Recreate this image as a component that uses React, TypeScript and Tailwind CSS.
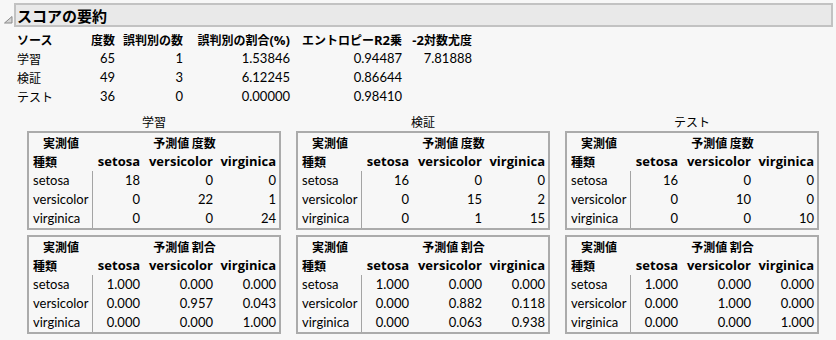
import React from "react";

const J = ({ children }: { children: React.ReactNode }) => (
  <span className="text-[12px] font-['Noto_Sans_CJK_JP',sans-serif]">{children}</span>
);

const REG = "font-['Lato','Noto_Sans_CJK_JP',sans-serif] text-[13px] text-black";
const BOLD = "font-['Open_Sans','Noto_Sans_CJK_JP',sans-serif] font-bold text-[13px] text-black";

type Row = [string, string, string, string, string, string];
const summary: Row[] = [
  ["学習", "65", "1", "1.53846", "0.94487", "7.81888"],
  ["検証", "49", "3", "6.12245", "0.86644", ""],
  ["テスト", "36", "0", "0.00000", "0.98410", ""],
];

const classes = ["setosa", "versicolor", "virginica"];

type Mat = { title: string; counts: string[][]; rates: string[][] };
const mats: Mat[] = [
  {
    title: "学習",
    counts: [["18", "0", "0"], ["0", "22", "1"], ["0", "0", "24"]],
    rates: [["1.000", "0.000", "0.000"], ["0.000", "0.957", "0.043"], ["0.000", "0.000", "1.000"]],
  },
  {
    title: "検証",
    counts: [["16", "0", "0"], ["0", "15", "2"], ["0", "1", "15"]],
    rates: [["1.000", "0.000", "0.000"], ["0.000", "0.882", "0.118"], ["0.000", "0.063", "0.938"]],
  },
  {
    title: "テスト",
    counts: [["16", "0", "0"], ["0", "10", "0"], ["0", "0", "10"]],
    rates: [["1.000", "0.000", "0.000"], ["0.000", "1.000", "0.000"], ["0.000", "0.000", "1.000"]],
  },
];

const SUMCOLS = "grid grid-cols-[60px_38px_68px_107px_112px_70px] h-[19px] leading-[19px] whitespace-nowrap";
const BOXCOLS = "grid grid-cols-[60px_47px_73px_63px] h-[19px] leading-[19px] whitespace-nowrap";

function MatrixBox({ kind, data, className = "" }: { kind: string; data: string[][]; className?: string }) {
  return (
    <div className={`w-[254px] border-2 border-[#ababab] pl-[4px] pr-[3px] ${className}`}>
      <div className={BOXCOLS}>
        <div className={`${BOLD} pl-[10px]`}><J>実測値</J></div>
        <div className={`${BOLD} col-span-3 text-center`}>
          <J>予測値 {kind}</J>
        </div>
      </div>
      <div className={BOXCOLS}>
        <div className={BOLD}><J>種類</J></div>
        {classes.map((c) => (
          <div key={c} className={`${BOLD} text-right`}>{c}</div>
        ))}
      </div>
      {data.map((row, i) => (
        <div key={i} className={BOXCOLS}>
          <div className={`${REG} border-r border-[#a4a4a4]`}>{classes[i]}</div>
          {row.map((v, j) => (
            <div key={j} className={`${REG} text-right`}>{v}</div>
          ))}
        </div>
      ))}
    </div>
  );
}

export default function App() {
  return (
    <div className="w-[836px] h-[340px] bg-[#f7f7f7] overflow-hidden pt-[3px]">
      {/* header */}
      <div className="flex items-start pr-[3px]">
        <div className="w-[14px] h-[24px] flex items-start">
          <svg width="14" height="24" viewBox="0 0 14 24">
            <polygon points="12,13.5 12,20 4.5,20" fill="#d4d4d4" stroke="#8a8a8a" strokeWidth="1" />
          </svg>
        </div>
        <div className="flex-1 h-[24px] bg-[#e9e9e9] border-2 border-[#c2c2c2] pl-[1px] flex items-center">
          <span className="text-[15px] font-bold leading-none font-['Noto_Sans_CJK_JP',sans-serif] text-black">
            スコアの要約
          </span>
        </div>
      </div>

      {/* summary table */}
      <div className="pl-[17px] mt-[3px]">
        <div className={SUMCOLS}>
          <div className={BOLD}><J>ソース</J></div>
          <div className={`${BOLD} text-right`}><J>度数</J></div>
          <div className={`${BOLD} text-right`}><J>誤判別の数</J></div>
          <div className={`${BOLD} text-right`}><J>誤判別の割合</J>(%)</div>
          <div className={`${BOLD} text-right`}><J>エントロピー</J>R2<J>乗</J></div>
          <div className={`${BOLD} text-right`}>-2<J>対数尤度</J></div>
        </div>
        {summary.map((r) => (
          <div key={r[0]} className={SUMCOLS}>
            <div className={REG}><J>{r[0]}</J></div>
            {r.slice(1).map((v, i) => (
              <div key={i} className={`${REG} text-right`}>{v}</div>
            ))}
          </div>
        ))}
      </div>

      {/* matrices */}
      <div className="flex gap-[15px] pl-[27px] mt-[6px]">
        {mats.map((m) => (
          <div key={m.title} className="flex flex-col w-[254px]">
            <div className={`${REG} h-[19px] leading-[19px] text-center`}><J>{m.title}</J></div>
            <MatrixBox kind="度数" data={m.counts} />
            <MatrixBox kind="割合" data={m.rates} className="mt-[5px]" />
          </div>
        ))}
      </div>
    </div>
  );
}
